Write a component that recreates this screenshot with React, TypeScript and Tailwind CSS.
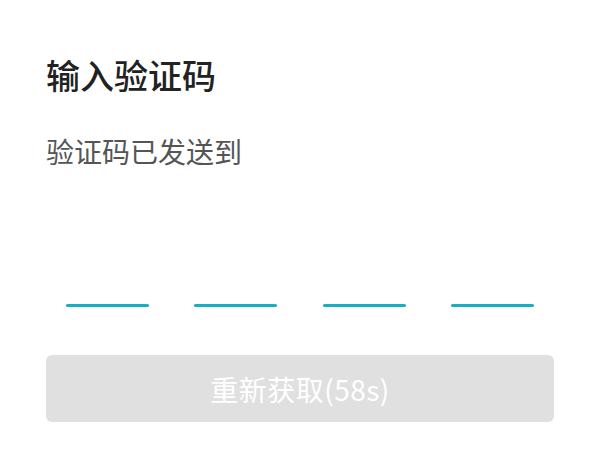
import React from 'react';

const font = { fontFamily: '"Noto Sans CJK SC", "Noto Sans", sans-serif' };

export default function App() {
    const slots = [0, 1, 2, 3];
    return (
        <div className="w-[600px] h-[450px] bg-white overflow-hidden px-[46px]" style={font}>
            {/* Title */}
            <h1 className="pt-[52px] text-[34px] leading-[45px] font-medium text-[#222222]">输入验证码</h1>
            {/* Subtitle */}
            <p className="mt-[36px] text-[28px] leading-[36px] text-[#555555]">验证码已发送到</p>

            {/* Code slots */}
            <div className="mt-[135px] px-5 flex justify-between">
                {slots.map((i) => (
                    <div key={i} className="w-[83px] h-[3px] bg-[#19adc6] rounded-full" />
                ))}
            </div>

            {/* Resend button */}
            <button
                disabled
                className="mt-[48px] w-full h-[67px] rounded-md bg-[#e0e0e0] text-white text-[28px] tracking-[0.5px] flex items-center justify-center"
            >
                重新获取(58s)
            </button>
        </div>
    );
}
